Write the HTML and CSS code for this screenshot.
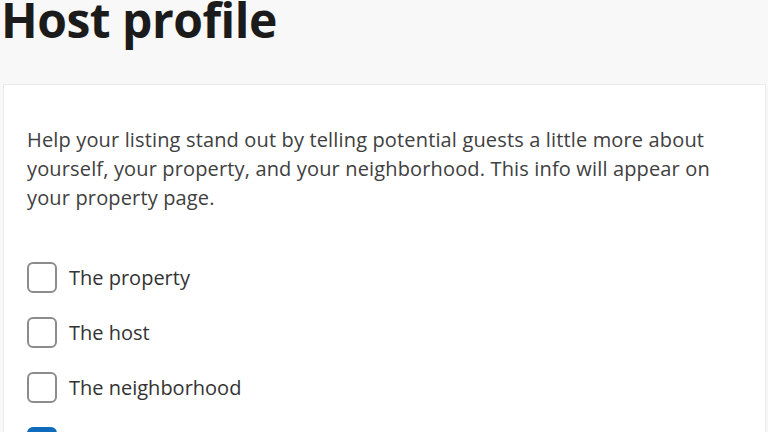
FILE: index.html
```html
<!DOCTYPE html>
<html>
<head>
  <title>Host profile</title>
  <link rel="stylesheet" href="styles.css">
</head>
<body>
  <div class="page">
    <h1 class="title">Host profile</h1>

    <div class="panel">
      <p class="intro">Help your listing stand out by telling potential guests a little more about yourself, your property, and your neighborhood. This info will appear on your property page.</p>

      <div class="options">
        <label class="option">
          <input type="checkbox">
          <span class="box"></span>
          <span class="text">The property</span>
        </label>
        <label class="option">
          <input type="checkbox">
          <span class="box"></span>
          <span class="text">The host</span>
        </label>
        <label class="option">
          <input type="checkbox">
          <span class="box"></span>
          <span class="text">The neighborhood</span>
        </label>
        <label class="option">
          <input type="checkbox" checked>
          <span class="box"></span>
          <span class="text">Show my profile photo to guests as well</span>
        </label>
      </div>
    </div>
  </div>
</body>
</html>
```

FILE: styles.css
```css
body {
  margin: 0;
  background-color: #f8f8f8;
  font-family: "Open Sans", "Noto Sans", sans-serif;
  color: #333;
  overflow: hidden;
}

.page {
  padding: 0 2px 0 3px;
}

.title {
  margin: 0 0 0 -2px;
  font-size: 48px;
  font-weight: 700;
  color: #1b1b1b;
  line-height: 40px;
  letter-spacing: -0.5px;
}

.panel {
  margin-top: 44px;
  background-color: #fff;
  border: 1px solid #ebebeb;
  padding: 40px 24px 24px 23px;
}

.intro {
  margin: 0;
  max-width: 700px;
  font-size: 20px;
  line-height: 29px;
  letter-spacing: 0.15px;
  color: #404040;
}

.options {
  display: flex;
  flex-direction: column;
  gap: 24px;
  margin-top: 50px;
}

.option {
  display: flex;
  align-items: center;
  gap: 12px;
  font-size: 20px;
  color: #333;
}

.option input {
  display: none;
}

.box {
  width: 26px;
  height: 27px;
  border: 2px solid #8c8c8c;
  border-radius: 6px;
  flex-shrink: 0;
}

.option input:checked + .box {
  background-color: #0f6cbd;
  border-color: #0f6cbd;
}
```
